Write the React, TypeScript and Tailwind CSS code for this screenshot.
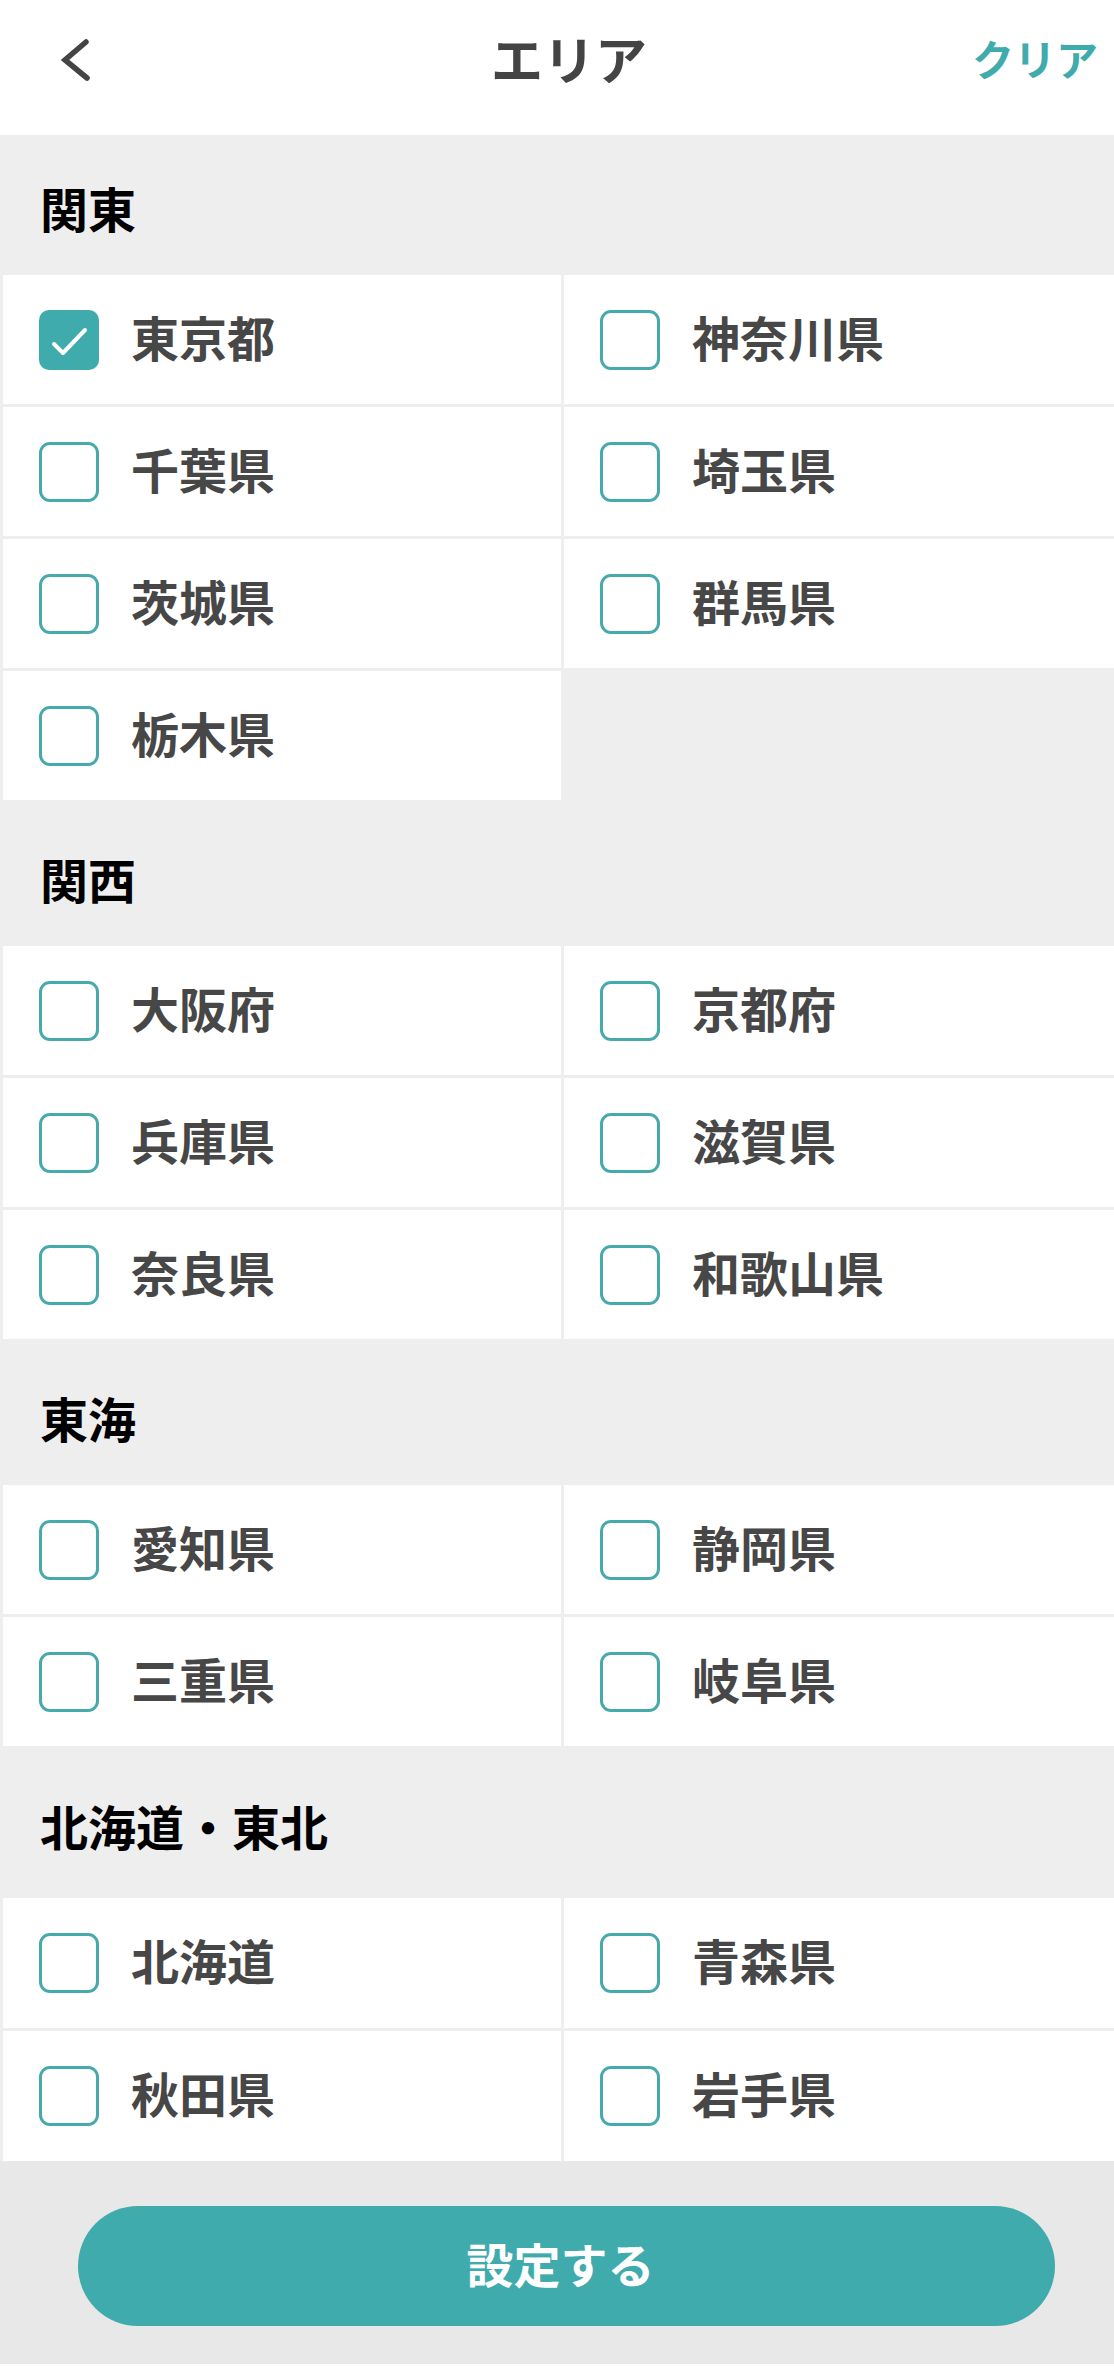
import React from "react";

type Section = {
  title: string;
  headerClass: string;
  rowClass: string;
  items: string[];
};

const sections: Section[] = [
  {
    title: "関東",
    headerClass: "h-[140px] pt-[4px]",
    rowClass: "h-[129px]",
    items: ["東京都", "神奈川県", "千葉県", "埼玉県", "茨城県", "群馬県", "栃木県"],
  },
  {
    title: "関西",
    headerClass: "h-[146px] pt-[10px]",
    rowClass: "h-[129px]",
    items: ["大阪府", "京都府", "兵庫県", "滋賀県", "奈良県", "和歌山県"],
  },
  {
    title: "東海",
    headerClass: "h-[146px] pt-[9px]",
    rowClass: "h-[129px]",
    items: ["愛知県", "静岡県", "三重県", "岐阜県"],
  },
  {
    title: "北海道・東北",
    headerClass: "h-[152px] pt-[5px]",
    rowClass: "h-[130px]",
    items: ["北海道", "青森県", "秋田県", "岩手県"],
  },
];

const checked = new Set(["東京都"]);

function CheckBox({ on }: { on: boolean }) {
  if (on) {
    return (
      <div className="w-[60px] h-[60px] rounded-[10px] bg-[#3fabac] flex items-center justify-center shrink-0">
        <svg width="60" height="60" viewBox="0 0 60 60">
          <polyline
            points="15,34 24,43 46,20"
            fill="none"
            stroke="#ffffff"
            strokeWidth="4"
            strokeLinecap="round"
            strokeLinejoin="round"
          />
        </svg>
      </div>
    );
  }
  return (
    <div className="w-[60px] h-[60px] rounded-[11px] border-[3px] border-[#47a9ab] bg-white shrink-0" />
  );
}

export default function App() {
  const font = {
    fontFamily: '"Noto Sans CJK JP", "Noto Sans", sans-serif',
  } as React.CSSProperties;
  return (
    <div className="w-[1114px] bg-[#eeeeee]" style={font}>
      {/* Header */}
      <div className="h-[135px] bg-white">
        <div className="h-[116px] grid grid-cols-[1fr_auto_1fr] items-center">
          <div className="flex items-center pl-[50px]">
            <svg width="40" height="50" viewBox="0 0 40 50">
              <polyline
                points="36,9 15,27 37,45"
                fill="none"
                stroke="#444444"
                strokeWidth="5.5"
                strokeLinecap="round"
                strokeLinejoin="miter"
              />
            </svg>
          </div>
          <div className="text-[52px] leading-none font-bold text-[#444444] pl-[24px]">エリア</div>
          <div className="flex justify-end pr-[16px]">
            <span className="text-[42px] leading-none font-bold text-[#3fabac]">クリア</span>
          </div>
        </div>
      </div>

      {sections.map((s) => (
        <div key={s.title}>
          <div className={`${s.headerClass} flex items-center pl-[40px]`}>
            <span className="text-[48px] leading-none font-bold text-black">{s.title}</span>
          </div>
          <div className="grid grid-cols-[558px_1fr] gap-[3px] pl-[3px]">
            {s.items.map((it) => (
              <div key={it} className={`${s.rowClass} bg-white flex items-center pl-[36px]`}>
                <CheckBox on={checked.has(it)} />
                <span className="ml-[32px] mb-[8px] text-[48px] leading-none font-bold text-[#474747]">{it}</span>
              </div>
            ))}
          </div>
        </div>
      ))}

      {/* Footer */}
      <div className="h-[203px] bg-[#e8e8e8] pt-[45px]">
        <button className="ml-[78px] w-[977px] h-[120px] rounded-full bg-[#3fabac] flex items-center justify-center pr-[12px]">
          <span className="mb-[8px] text-[47px] leading-none font-bold text-white">設定する</span>
        </button>
      </div>
    </div>
  );
}
